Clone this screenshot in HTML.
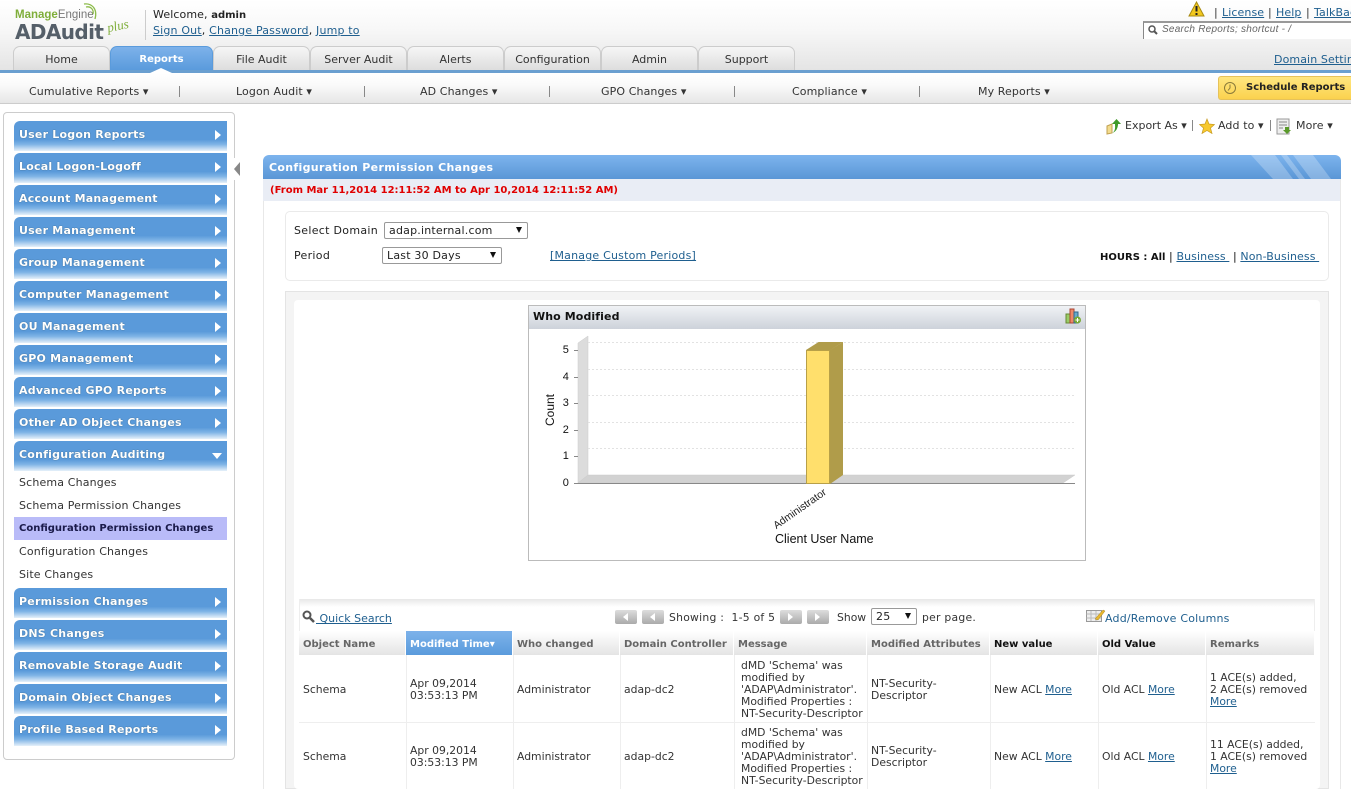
<!DOCTYPE html>
<html><head><meta charset="utf-8">
<style>
html,body{margin:0;padding:0;background:#fff}
#p{position:relative;width:1351px;height:789px;overflow:hidden;font-family:"DejaVu Sans","Liberation Sans",sans-serif;font-size:11px;letter-spacing:.1px;color:#222;background:#fff}
#p div,#p span.t,#p a.t,#p svg{position:absolute}
#p b{font-size:10px;letter-spacing:0}
.t{white-space:nowrap;line-height:12px}
a{color:#1f5f8f;text-decoration:underline}
.tab{top:46px;height:25px;border:1px solid #ccc;border-bottom:0;border-radius:7px 7px 0 0;background:linear-gradient(#f6f6f6,#dcdcdc);text-align:center;line-height:26px;color:#333;box-sizing:border-box;letter-spacing:0}
.nav{top:86px;color:#333;line-height:12px;white-space:nowrap}
.sep{top:86px;width:1px;height:11px;background:#888}
.m{left:14px;width:213px;height:30px;border-radius:6px 0 0 0;background:linear-gradient(#5a9ada 0,#5a9ada 62%,#7fb4e6 78%,#e6f0fa 100%);color:#fff;font-weight:bold;font-size:11px;letter-spacing:.22px;line-height:27px;text-indent:5px;white-space:nowrap;text-shadow:0 0 1px #356}
.m:after{content:"";position:absolute;right:6px;top:9px;border-left:6px solid #fff;border-top:5px solid transparent;border-bottom:5px solid transparent}
.m.o:after{right:5px;top:12px;border-top:6px solid #fff;border-bottom:0;border-left:5px solid transparent;border-right:5px solid transparent}
.s{left:19px;font-size:11px;letter-spacing:.15px;color:#333;white-space:nowrap;line-height:12px}
.th{top:631px;height:24px;line-height:27px;font-weight:bold;color:#666;background:linear-gradient(#fff,#e4e4e4);border-right:1px solid #fff;box-sizing:border-box;padding-left:4px;white-space:nowrap;font-size:10px;letter-spacing:0}
.c{white-space:nowrap;line-height:12px;color:#333;font-size:10.8px;letter-spacing:0}
.v{width:1px;background:#eee}
.pg{top:610px;width:22px;height:14px;border-radius:2px;background:linear-gradient(#ddd,#aaa)}
.pg:after{content:"";position:absolute;top:3px;left:8px;border-top:4px solid transparent;border-bottom:4px solid transparent}
.l:after{border-right:5px solid #fff}
.r:after{border-left:5px solid #fff}
.sel{background:#fff;border:1px solid #999;border-radius:2px;box-sizing:border-box;line-height:16px;padding-left:4px;color:#222;font-size:11px;letter-spacing:.2px}
.sel:after{content:"";position:absolute;right:5px;top:4px;border-top:6px solid #111;border-left:3px solid transparent;border-right:3px solid transparent}
.yt{font:11px "Liberation Sans",sans-serif;width:12px;text-align:right;left:557px;color:#111}
</style></head><body>
<div id="p">

<!-- header -->
<div style="left:0;top:0;width:1351px;height:71px;background:linear-gradient(#fff 0,#f8f8f8 40%,#e4e4e4 100%)"></div>
<span class="t" style="left:15px;top:8px;font:bold 11.5px 'Liberation Sans',sans-serif;color:#7fae3a;line-height:14px;letter-spacing:0">Manage<span style="font-weight:normal;color:#777">Engine</span></span>
<svg style="left:83px;top:2px" width="20" height="20" viewBox="0 0 20 20"><path d="M1 2C8 1 15 6 12 17M3 5C8 4 11 8 10 12" fill="none" stroke="#8cbb4a" stroke-width="1.3"/></svg>
<span class="t" style="left:15px;top:20px;font:bold 20px 'DejaVu Sans',sans-serif;color:#555f69;line-height:24px;letter-spacing:-.6px">ADAudit</span>
<span class="t" style="left:107px;top:18px;font:italic 13px 'Liberation Serif',serif;color:#7fae3a;line-height:16px;letter-spacing:0;transform:rotate(-12deg)">plus</span>
<div style="left:145px;top:10px;width:1px;height:30px;background:#ccc"></div>
<span class="t" style="left:153px;top:9px">Welcome, <b>admin</b></span>
<span class="t" style="left:153px;top:25px;letter-spacing:.17px"><a href="#">Sign Out</a>, <a href="#">Change Password</a>, <a href="#">Jump to</a></span>

<svg style="left:1188px;top:1px" width="17" height="16" viewBox="0 0 17 16"><path d="M8.5 1L16 15H1Z" fill="#f2c81e" stroke="#a88a10"/><path d="M8.5 5V10.500M8.500 12V14" stroke="#222" stroke-width="2"/></svg>
<span class="t" style="left:1214px;top:7px;color:#333">|</span>
<a class="t" href="#" style="left:1222px;top:7px">License</a>
<span class="t" style="left:1268px;top:7px;color:#333">|</span>
<a class="t" href="#" style="left:1276px;top:7px">Help</a>
<span class="t" style="left:1306px;top:7px;color:#333">|</span>
<a class="t" href="#" style="left:1314px;top:7px">TalkBack</a>
<div style="left:1143px;top:21px;width:208px;height:18px;background:#fff;border-left:1px solid #888;border-top:2px solid #999;box-sizing:border-box"></div>
<svg style="left:1148px;top:25px" width="10" height="10" viewBox="0 0 10 10"><circle cx="4" cy="4" r="3" fill="none" stroke="#555" stroke-width="1.500"/><path d="M6 6L9 9" stroke="#555" stroke-width="2"/></svg>
<span class="t" style="left:1162px;top:24px;font:italic 10px 'Liberation Sans',sans-serif;line-height:12px;color:#666;letter-spacing:.25px">Search Reports; shortcut - /</span>
<a class="t" href="#" style="left:1274px;top:54px">Domain Settings</a>

<div class="tab" style="left:13px;width:97px">Home</div>
<div class="tab" style="left:110px;width:103px;background:linear-gradient(#7db2ea,#5a9bdc);border:1px solid #5a9bdc;color:#fff;font-weight:bold;font-size:10px">Reports</div>
<div class="tab" style="left:213px;width:97px">File Audit</div>
<div class="tab" style="left:310px;width:97px">Server Audit</div>
<div class="tab" style="left:407px;width:97px">Alerts</div>
<div class="tab" style="left:504px;width:97px">Configuration</div>
<div class="tab" style="left:601px;width:97px">Admin</div>
<div class="tab" style="left:698px;width:97px">Support</div>
<div style="left:0;top:70px;width:1351px;height:3px;background:#6a9fd0"></div>
<div style="left:150px;top:68px;border-bottom:5px solid #fff;border-left:11px solid transparent;border-right:11px solid transparent"></div>

<!-- subnav -->
<div style="left:0;top:73px;width:1351px;height:30px;background:linear-gradient(#fff,#fafafa 40%,#e6e6e6);border-bottom:1px solid #ccc"></div>
<span class="nav" style="position:absolute;left:29px">Cumulative Reports ▾</span><div class="sep" style="left:179px"></div>
<span class="nav" style="position:absolute;left:236px">Logon Audit ▾</span><div class="sep" style="left:364px"></div>
<span class="nav" style="position:absolute;left:420px">AD Changes ▾</span><div class="sep" style="left:549px"></div>
<span class="nav" style="position:absolute;left:601px">GPO Changes ▾</span><div class="sep" style="left:734px"></div>
<span class="nav" style="position:absolute;left:792px">Compliance ▾</span><div class="sep" style="left:919px"></div>
<span class="nav" style="position:absolute;left:978px">My Reports ▾</span>
<div style="left:1218px;top:76px;width:133px;height:24px;background:linear-gradient(#ffe680,#fbd24e);border:1px solid #e6c25a;border-right:0;border-radius:3px 0 0 3px;box-sizing:border-box"></div>
<svg style="left:1223px;top:81px" width="14" height="14" viewBox="0 0 14 14"><circle cx="7" cy="7" r="5.500" fill="none" stroke="#8a7a3a"/><path d="M7 3.500V7L5 9.500" fill="none" stroke="#8a7a3a"/></svg>
<span class="t" style="left:1246px;top:82px;font-weight:bold;font-size:10px;letter-spacing:0;color:#222">Schedule Reports</span>

<!-- sidebar -->
<div style="left:3px;top:112px;width:232px;height:648px;border:1px solid #ccc;border-radius:4px;box-sizing:border-box;background:#fff"></div>
<div style="left:231px;top:158px;width:10px;height:22px;background:#fff"></div>
<div style="left:234px;top:162px;border-right:6px solid #888;border-top:7px solid transparent;border-bottom:7px solid transparent"></div>
<div class="m" style="top:121px">User Logon Reports</div>
<div class="m" style="top:153px">Local Logon-Logoff</div>
<div class="m" style="top:185px">Account Management</div>
<div class="m" style="top:217px">User Management</div>
<div class="m" style="top:249px">Group Management</div>
<div class="m" style="top:281px">Computer Management</div>
<div class="m" style="top:313px">OU Management</div>
<div class="m" style="top:345px">GPO Management</div>
<div class="m" style="top:377px">Advanced GPO Reports</div>
<div class="m" style="top:409px">Other AD Object Changes</div>
<div class="m o" style="top:441px">Configuration Auditing</div>
<div class="s" style="top:477px">Schema Changes</div>
<div class="s" style="top:500px">Schema Permission Changes</div>
<div style="left:14px;top:517px;width:213px;height:23px;background:#b9bbf8"></div>
<div class="s" style="top:523px;font-weight:bold;font-size:10px;letter-spacing:0;color:#1a1a4a">Configuration Permission Changes</div>
<div class="s" style="top:546px">Configuration Changes</div>
<div class="s" style="top:569px">Site Changes</div>
<div class="m" style="top:588px">Permission Changes</div>
<div class="m" style="top:620px">DNS Changes</div>
<div class="m" style="top:652px">Removable Storage Audit</div>
<div class="m" style="top:684px">Domain Object Changes</div>
<div class="m" style="top:716px">Profile Based Reports</div>

<!-- export toolbar -->
<svg style="left:1106px;top:118px" width="16" height="17" viewBox="0 0 16 17"><path d="M1 8L6 6V15L1 16Z" fill="#f3dc8e" stroke="#c0a050"/><path d="M6 15C10 13 9 8 9 6H6L10.500 1L15 6H12C12 10 10 14 6 15Z" fill="#3f9a2a"/></svg>
<span class="t" style="left:1125px;top:120px;color:#333;letter-spacing:0">Export As ▾</span>
<div style="left:1192px;top:120px;width:1px;height:11px;background:#888"></div>
<svg style="left:1199px;top:118px" width="16" height="16" viewBox="0 0 16 16"><path d="M8 1L10 6L15.500 6.500L11.500 10L13 15.500L8 12.500L3 15.500L4.500 10L.5 6.500L6 6Z" fill="#f7c92e" stroke="#c79a20" stroke-width=".7"/></svg>
<span class="t" style="left:1218px;top:120px;color:#333">Add to ▾</span>
<div style="left:1270px;top:120px;width:1px;height:11px;background:#888"></div>
<svg style="left:1276px;top:118px" width="16" height="17" viewBox="0 0 16 17"><rect x="1" y="1" width="12" height="15" fill="#eee" stroke="#999"/><path d="M3 4H11M3 7H11M3 10H7" stroke="#888"/><path d="M9 9H13V12H15L11 16L7 12H9Z" fill="#5a9a2a"/></svg>
<span class="t" style="left:1296px;top:120px;color:#333">More ▾</span>

<!-- report panel -->
<div style="left:263px;top:155px;width:1078px;height:24px;border-radius:6px 6px 0 0;background:linear-gradient(#7db4ee,#5a96d6);overflow:hidden">
<svg style="left:980px;top:0" width="98" height="24" viewBox="0 0 98 24"><path d="M8 0H32L50 24H30ZM38 0H44L62 24H56ZM50 0H70L88 24H68Z" fill="#fff" opacity=".25"/></svg>
</div>
<span class="t" style="left:269px;top:162px;color:#fff;font-weight:bold;font-size:11px;letter-spacing:.32px">Configuration Permission Changes</span>
<div style="left:263px;top:179px;width:1078px;height:22px;background:#e9edf5"></div>
<span class="t" style="left:270px;top:185px;color:#e00000;font-weight:bold;font-size:10px;letter-spacing:0">(From Mar 11,2014 12:11:52 AM to Apr 10,2014 12:11:52 AM)</span>
<div style="left:263px;top:201px;width:1px;height:588px;background:#e8e8e8"></div>
<div style="left:1340px;top:179px;width:1px;height:610px;background:#e8e8e8"></div>

<div style="left:285px;top:211px;width:1044px;height:70px;border:1px solid #eaeaea;border-radius:5px;box-sizing:border-box"></div>
<span class="t" style="left:294px;top:225px;letter-spacing:.3px">Select Domain</span>
<div class="sel" style="left:384px;top:222px;width:144px;height:17px">adap.internal.com</div>
<span class="t" style="left:294px;top:250px;letter-spacing:.3px">Period</span>
<div class="sel" style="left:382px;top:247px;width:120px;height:17px">Last 30 Days</div>
<a class="t" href="#" style="left:550px;top:250px;letter-spacing:.2px">[Manage Custom Periods]</a>
<span class="t" style="left:1100px;top:251px;color:#111"><b>HOURS : All</b> | <a href="#">Business&nbsp;</a> | <a href="#">Non-Business&nbsp;</a></span>

<!-- chart area -->
<div style="left:285px;top:291px;width:1044px;height:498px;background:#f4f4f4;border:1px solid #e4e4e4;box-sizing:border-box"></div>
<div style="left:294px;top:300px;width:1026px;height:489px;background:#fff;border-radius:4px"></div>

<div style="left:528px;top:305px;width:558px;height:256px;border:1px solid #bbb;box-sizing:border-box;background:#fff"></div>
<div style="left:529px;top:306px;width:556px;height:23px;background:linear-gradient(#f0f2f5,#cdd2da)"></div>
<span class="t" style="left:533px;top:311px;font-weight:bold;font-size:11px;letter-spacing:.1px;color:#111">Who Modified</span>
<svg style="left:1065px;top:308px" width="16" height="16" viewBox="0 0 16 16"><rect x="1" y="6" width="4" height="9" fill="#9c6" stroke="#683"/><rect x="5" y="1" width="4" height="14" fill="#e86" stroke="#a43"/><rect x="9" y="4" width="4" height="11" fill="#6ac" stroke="#368"/><circle cx="12.500" cy="12" r="3.500" fill="#7a3"/><path d="M10.500 12H14.500M12.500 10V14" stroke="#fff"/></svg>

<svg style="left:520px;top:300px" width="580" height="270" viewBox="0 0 580 270">
<path d="M68 36V175L58 183V43Z" fill="#dcdcdc" stroke="#ccc" stroke-width=".5"/>
<path d="M68 175H555L543 183H58Z" fill="#d2d2d2" stroke="#ccc" stroke-width=".5"/>
<path d="M58 183.500H555" stroke="#888"/>
<path d="M68 42.500H555M68 69.500H555M68 95.500H555M68 122.500H555M68 148.500H555" stroke="#e2e2e2" stroke-dasharray="2 2" fill="none"/>
<path d="M54 50.500H58M54 77.500H58M54 103.500H58M54 130.500H58M54 156.500H58M54 183.500H58" stroke="#888"/>
</svg>
<div style="left:806px;top:350px;width:24px;height:134px;background:#ffdf6c;border:1px solid #b8a048;box-sizing:border-box"></div>
<div style="left:806px;top:342px;width:37px;height:8px;background:#b09c4a;clip-path:polygon(0 100%,34% 0,100% 0,66% 100%)"></div>
<div style="left:830px;top:342px;width:13px;height:142px;background:#b09c4a;clip-path:polygon(0 8px,100% 0,100% 133px,0 100%)"></div>

<span class="t yt" style="top:344px">5</span>
<span class="t yt" style="top:371px">4</span>
<span class="t yt" style="top:397px">3</span>
<span class="t yt" style="top:424px">2</span>
<span class="t yt" style="top:450px">1</span>
<span class="t yt" style="top:477px">0</span>
<span class="t" style="left:532px;top:403px;width:36px;text-align:center;font:12px 'Liberation Sans',sans-serif;line-height:14px;letter-spacing:0;transform:rotate(-90deg);color:#111">Count</span>
<span class="t" style="left:769px;top:503px;font:10.5px 'Liberation Sans',sans-serif;line-height:12px;letter-spacing:0;transform:rotate(-35deg);color:#222">Administrator</span>
<span class="t" style="left:775px;top:532px;font:12.5px 'Liberation Sans',sans-serif;line-height:14px;letter-spacing:0;color:#111">Client User Name</span>

<!-- table toolbar -->
<div style="left:299px;top:599px;width:1016px;height:32px;background:linear-gradient(#e8e8e8,#fff 25%);border-left:1px solid #eee;border-right:1px solid #eee;box-sizing:border-box"></div>
<svg style="left:302px;top:610px" width="13" height="13" viewBox="0 0 13 13"><circle cx="5" cy="5" r="3.500" fill="none" stroke="#555" stroke-width="2"/><path d="M8 8L12 12" stroke="#555" stroke-width="2.500"/></svg>
<a class="t" href="#" style="left:316px;top:613px;letter-spacing:0">&nbsp;Quick Search</a>
<div class="pg l" style="left:615px"></div>
<div class="pg l" style="left:642px"></div>
<span class="t" style="left:669px;top:612px;color:#333;font-size:10.8px;letter-spacing:.25px">Showing :&nbsp; 1-5 of 5</span>
<div class="pg r" style="left:780px"></div>
<div class="pg r" style="left:807px"></div>
<span class="t" style="left:837px;top:612px;color:#333;font-size:10.8px;letter-spacing:0">Show</span>
<div class="sel" style="left:871px;top:608px;width:46px;height:17px">25</div>
<span class="t" style="left:922px;top:612px;color:#333;font-size:10.8px;letter-spacing:.25px">per page.</span>
<svg style="left:1086px;top:608px" width="20" height="15" viewBox="0 0 20 15"><rect x=".5" y="2.500" width="15" height="11" fill="#eee" stroke="#999"/><path d="M.5 6H15M.5 10H15M5 3V13M10 3V13" stroke="#bbb"/><path d="M9 11L17 2L19 3L12 12Z" fill="#e8b830" stroke="#a68020" stroke-width=".5"/></svg>
<a class="t" href="#" style="left:1105px;top:613px;text-decoration:none;letter-spacing:.2px">Add/Remove Columns</a>

<!-- table -->
<div class="th" style="left:299px;width:107px">Object Name</div>
<div class="th" style="left:406px;width:107px;color:#fff;background:linear-gradient(#7db2ea,#5a9bdc)">Modified Time▾</div>
<div class="th" style="left:513px;width:107px">Who changed</div>
<div class="th" style="left:620px;width:114px">Domain Controller</div>
<div class="th" style="left:734px;width:133px">Message</div>
<div class="th" style="left:867px;width:123px">Modified Attributes</div>
<div class="th" style="left:990px;width:108px;color:#111">New value</div>
<div class="th" style="left:1098px;width:108px;color:#111">Old Value</div>
<div class="th" style="left:1206px;width:109px">Remarks</div>

<div class="v" style="left:406px;top:655px;height:134px"></div>
<div class="v" style="left:513px;top:655px;height:134px"></div>
<div class="v" style="left:620px;top:655px;height:134px"></div>
<div class="v" style="left:734px;top:655px;height:134px"></div>
<div class="v" style="left:867px;top:655px;height:134px"></div>
<div class="v" style="left:990px;top:655px;height:134px"></div>
<div class="v" style="left:1098px;top:655px;height:134px"></div>
<div class="v" style="left:1206px;top:655px;height:134px"></div>
<div style="left:299px;top:722px;width:1016px;height:1px;background:#eee"></div>

<span class="t c" style="left:303px;top:684px">Schema</span>
<span class="t c" style="left:410px;top:678px">Apr 09,2014<br>03:53:13 PM</span>
<span class="t c" style="left:517px;top:684px">Administrator</span>
<span class="t c" style="left:624px;top:684px">adap-dc2</span>
<span class="t c" style="left:741px;top:660px">dMD 'Schema' was<br>modified by<br>'ADAP\Administrator'.<br>Modified Properties :<br>NT-Security-Descriptor</span>
<span class="t c" style="left:871px;top:678px">NT-Security-<br>Descriptor</span>
<span class="t c" style="left:994px;top:684px">New ACL <a href="#">More</a></span>
<span class="t c" style="left:1102px;top:684px">Old ACL <a href="#">More</a></span>
<span class="t c" style="left:1210px;top:672px">1 ACE(s) added,<br>2 ACE(s) removed<br><a href="#">More</a></span>

<span class="t c" style="left:303px;top:751px">Schema</span>
<span class="t c" style="left:410px;top:745px">Apr 09,2014<br>03:53:13 PM</span>
<span class="t c" style="left:517px;top:751px">Administrator</span>
<span class="t c" style="left:624px;top:751px">adap-dc2</span>
<span class="t c" style="left:741px;top:727px">dMD 'Schema' was<br>modified by<br>'ADAP\Administrator'.<br>Modified Properties :<br>NT-Security-Descriptor</span>
<span class="t c" style="left:871px;top:745px">NT-Security-<br>Descriptor</span>
<span class="t c" style="left:994px;top:751px">New ACL <a href="#">More</a></span>
<span class="t c" style="left:1102px;top:751px">Old ACL <a href="#">More</a></span>
<span class="t c" style="left:1210px;top:739px">11 ACE(s) added,<br>1 ACE(s) removed<br><a href="#">More</a></span>

</div>
</body></html>
